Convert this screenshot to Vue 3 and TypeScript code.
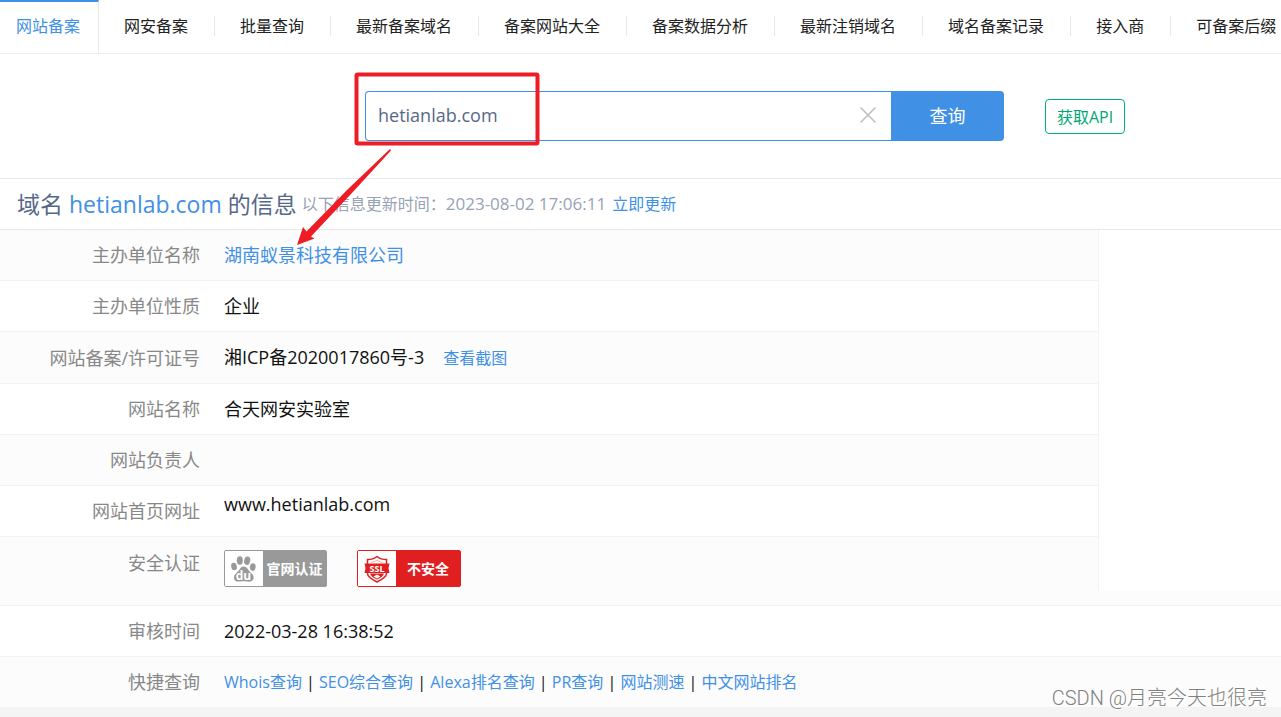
<script setup lang="ts">
import { ref } from 'vue'

const tabs: string[] = [
  '网安备案',
  '批量查询',
  '最新备案域名',
  '备案网站大全',
  '备案数据分析',
  '最新注销域名',
  '域名备案记录',
  '接入商',
  '可备案后缀',
]

const quickLinks: string[] = ['Whois查询', 'SEO综合查询', 'Alexa排名查询', 'PR查询', '网站测速', '中文网站排名']

const keyword = ref<string>('hetianlab.com')

function clearKeyword(): void {
  keyword.value = ''
}
</script>

<template>
  <div class="page">
    <nav class="tabs">
      <a class="tab-active" href="#">网站备案</a>
      <a v-for="tab in tabs" :key="tab" class="tab" href="#"><span>{{ tab }}</span></a>
    </nav>

    <form class="search" @submit.prevent>
      <div class="field">
        <input v-model="keyword" class="field-input" type="text" aria-label="域名" />
        <button class="field-clear" type="button" aria-label="清除" @click="clearKeyword">
          <svg width="16" height="16" viewBox="0 0 16 16">
            <path d="M0.5 0.5 15.5 15.5M15.5 0.5 0.5 15.5" fill="none" stroke="#bdbdbd" stroke-width="1.5" />
          </svg>
        </button>
      </div>
      <button class="submit" type="submit">查询</button>
      <button class="api" type="button">获取API</button>
    </form>

    <header class="heading">
      <h1 class="title">域名 <a class="title-domain" href="#">hetianlab.com</a> 的信息</h1>
      <p class="updated">以下信息更新时间：<time>2023-08-02 17:06:11</time></p>
      <a class="refresh" href="#">立即更新</a>
    </header>

    <main class="details">
      <table class="info">
        <tbody>
          <tr>
            <th scope="row">主办单位名称</th>
            <td><a href="#">湖南蚁景科技有限公司</a></td>
          </tr>
          <tr>
            <th scope="row">主办单位性质</th>
            <td>企业</td>
          </tr>
          <tr class="licence">
            <th scope="row">网站备案/许可证号</th>
            <td>湘ICP备2020017860号-3<a class="shot" href="#">查看截图</a></td>
          </tr>
          <tr>
            <th scope="row">网站名称</th>
            <td>合天网安实验室</td>
          </tr>
          <tr>
            <th scope="row">网站负责人</th>
            <td></td>
          </tr>
          <tr>
            <th scope="row">网站首页网址</th>
            <td class="site">www.hetianlab.com</td>
          </tr>
          <tr class="safety">
            <th scope="row">安全认证</th>
            <td>
              <div class="badges">
                <a class="badge" href="#">
                  <span class="badge-icon">
                    <svg width="28" height="30" viewBox="0 0 28 30">
                      <g fill="#999">
                        <ellipse cx="4" cy="12.5" rx="2.8" ry="3.8" transform="rotate(-12 4 12.5)" />
                        <ellipse cx="9.8" cy="6.500" rx="3" ry="4.200" />
                        <ellipse cx="17.200" cy="6.700" rx="3" ry="4.200" transform="rotate(10 17.200 6.700)" />
                        <ellipse cx="22.800" cy="13" rx="2.800" ry="3.800" transform="rotate(8 22.800 13)" />
                        <path d="M13.500 12.500c3.500 0 4.500 3.500 7 6 3 2.500 3.500 4 3 6-.7 3-3.500 3.500-6.500 3-2.500-.4-4.500-.4-7 0-3.500.5-6-.5-6-4 0-3 2-4 4-6s2.500-5 5.500-5z" />
                      </g>
                      <text x="13.500" y="26" text-anchor="middle" fill="#fff" class="du">du</text>
                    </svg>
                  </span>
                  <span class="badge-text">官网认证</span>
                </a>
                <a class="badge badge-red" href="#">
                  <span class="badge-icon">
                    <svg width="28" height="30" viewBox="0 0 28 30">
                      <path d="M14 2.500c2.500 2 5.500 3 9.500 3v14c0 3.500-4.500 6-9.500 8.500C9 25.500 4.500 23 4.500 19.500v-14c4 0 7-1 9.500-3z" fill="#fff" stroke="#e02020" stroke-width="1.500" />
                      <path d="M7 19.500h14c-.5 2.500-3.500 4.500-7 6-3.500-1.500-6.500-3.500-7-6z" fill="#e02020" />
                      <path d="M10.500 22.500 14 20.500l3.500 2L14 24.500z" fill="#fff" />
                      <path d="M7.500 8.500c2.500-.3 4.500-1 6.500-2.200 2 1.200 4 1.900 6.500 2.200" fill="none" stroke="#f2a0a0" stroke-width="0.800" />
                      <path d="M1.500 9.500h25l-1 4.800 1 4.700h-25l1-4.700z" fill="#e02020" />
                      <text x="14" y="17.500" text-anchor="middle" fill="#fff" class="ssl">SSL</text>
                    </svg>
                  </span>
                  <span class="badge-text">不安全</span>
                </a>
              </div>
            </td>
          </tr>
          <tr>
            <th scope="row">审核时间</th>
            <td>2022-03-28 16:38:52</td>
          </tr>
          <tr>
            <th scope="row">快捷查询</th>
            <td class="quick">
              <template v-for="(link, i) in quickLinks" :key="link">
                <span v-if="i > 0"> | </span><a href="#">{{ link }}</a>
              </template>
            </td>
          </tr>
        </tbody>
      </table>
      <aside class="side-panel"></aside>
    </main>

    <footer class="bottom"></footer>

    <svg class="annotation" width="560" height="260" viewBox="0 0 560 260" aria-hidden="true">
      <rect x="356.500" y="74.500" width="181" height="69" rx="1" fill="none" stroke="#ee1c25" stroke-width="4" />
      <path d="M390 149 391 150.500 351 194 311 236.500 314.500 238.500 297 245 303 227 306.500 231.500 347 190z" fill="#ee1c25" />
    </svg>
    <div class="watermark">CSDN @月亮今天也很亮</div>
  </div>
</template>

<style>
body {
  margin: 0;
  background: #fff;
}
</style>

<style scoped>
.page {
  position: relative;
  overflow: hidden;
  min-height: 100vh;
  display: flex;
  flex-direction: column;
  font-family: "Open Sans", "Noto Sans CJK SC", sans-serif;
  font-size: 18px;
  line-height: 24px;
  color: #111;
}

.page * {
  box-sizing: border-box;
}

a {
  color: #4090e6;
  text-decoration: none;
}

button,
input {
  font-family: inherit;
  margin: 0;
}

.tabs {
  display: flex;
  height: 54px;
  border-bottom: 1px solid #eee;
  font-size: 16px;
  white-space: nowrap;
}

.tab-active {
  flex: none;
  padding: 12px 18px 0 16px;
  border-top: 2px solid #4090e6;
  border-right: 1px solid #e8e8e8;
}

.tab {
  flex: none;
  padding-top: 16px;
  color: #222;
}

.tab span {
  display: block;
  height: 20px;
  line-height: 20px;
  padding: 0 26px 0 25px;
  border-right: 1px solid #e8e8e8;
}

.search {
  display: flex;
  align-items: center;
  height: 124px;
  padding-left: 365px;
}

.field {
  display: flex;
  align-items: center;
  width: 526px;
  height: 50px;
  padding-bottom: 2px;
  border: 1px solid #4090e6;
  border-right: 0;
  border-radius: 4px 0 0 4px;
}

.field-input {
  flex: 1;
  min-width: 0;
  height: 46px;
  padding: 0 12px;
  border: 0;
  outline: 0;
  background: transparent;
  font-size: 18px;
  color: #56688a;
}

.field-clear {
  display: flex;
  padding: 0;
  margin-right: 15px;
  border: 0;
  background: transparent;
}

.submit {
  width: 113px;
  height: 50px;
  padding: 0 0 2px;
  border: 0;
  border-radius: 0 4px 4px 0;
  background: #4090e6;
  color: #fff;
  font-size: 18px;
}

.api {
  width: 80px;
  height: 35px;
  margin-left: 41px;
  padding: 0;
  border: 1px solid #00b27a;
  border-radius: 4px;
  background: #fff;
  color: #00a870;
  font-size: 16px;
}

.heading {
  display: flex;
  align-items: center;
  height: 52px;
  padding-left: 17px;
  border-top: 1px solid #e2e6ee;
  border-bottom: 1px solid #e6e6e6;
  font-size: 16px;
}

.title {
  margin: 0;
  font-size: 23px;
  font-weight: 400;
  color: #56688a;
}

.updated {
  margin: 0 6px 0 5px;
  color: #98a2b5;
}

.updated time {
  font-size: 17px;
}

.details {
  position: relative;
}

.info {
  width: 100%;
  border-collapse: separate;
  border-spacing: 0;
}

.info th,
.info td {
  height: 51px;
  padding: 0 12px;
  border-bottom: 1px solid #f3f3f3;
  text-align: left;
}

.info th {
  width: 212px;
  font-weight: 400;
  text-align: right;
  color: #888;
}

.info tr:nth-child(odd) {
  background: #fcfcfc;
}

.info .licence th {
  height: 52px;
}

.info .site {
  padding-bottom: 14px;
}

.info .safety th {
  height: 69px;
  padding-top: 14px;
  vertical-align: top;
}

.info .safety td {
  padding-top: 13px;
  vertical-align: top;
}

.info .quick,
.shot {
  font-size: 16px;
}

.shot {
  margin-left: 19px;
}

.badges {
  display: flex;
  gap: 30px;
}

.badge {
  display: flex;
  width: 103px;
  height: 37px;
  border: 1px solid #999;
  border-radius: 2px;
  background: #999;
  color: #fff;
  font-size: 14px;
  font-weight: 700;
}

.badge-red {
  width: 104px;
  border-color: #e02020;
  background: #e02020;
}

.badge-icon {
  display: flex;
  align-items: center;
  justify-content: center;
  width: 38px;
  background: #fff;
}

.badge-text {
  flex: 1;
  line-height: 35px;
  text-align: center;
}

.du {
  font: 700 12px "Open Sans", sans-serif;
}

.ssl {
  font: 700 9px "Open Sans", sans-serif;
}

.side-panel {
  position: absolute;
  top: 0;
  right: 0;
  width: 183px;
  height: 361px;
  border-left: 1px solid #f3f3f3;
  background: #fff;
}

.bottom {
  flex: 1;
  min-height: 9px;
  background: #f4f4f4;
}

.annotation {
  position: absolute;
  top: 0;
  left: 0;
  pointer-events: none;
}

.watermark {
  position: absolute;
  right: 14px;
  bottom: 7px;
  font-family: Roboto, "Noto Sans CJK SC", sans-serif;
  font-size: 20px;
  font-weight: 300;
  color: #808080;
  text-shadow: 1px 1px 0 #fff;
}
</style>
